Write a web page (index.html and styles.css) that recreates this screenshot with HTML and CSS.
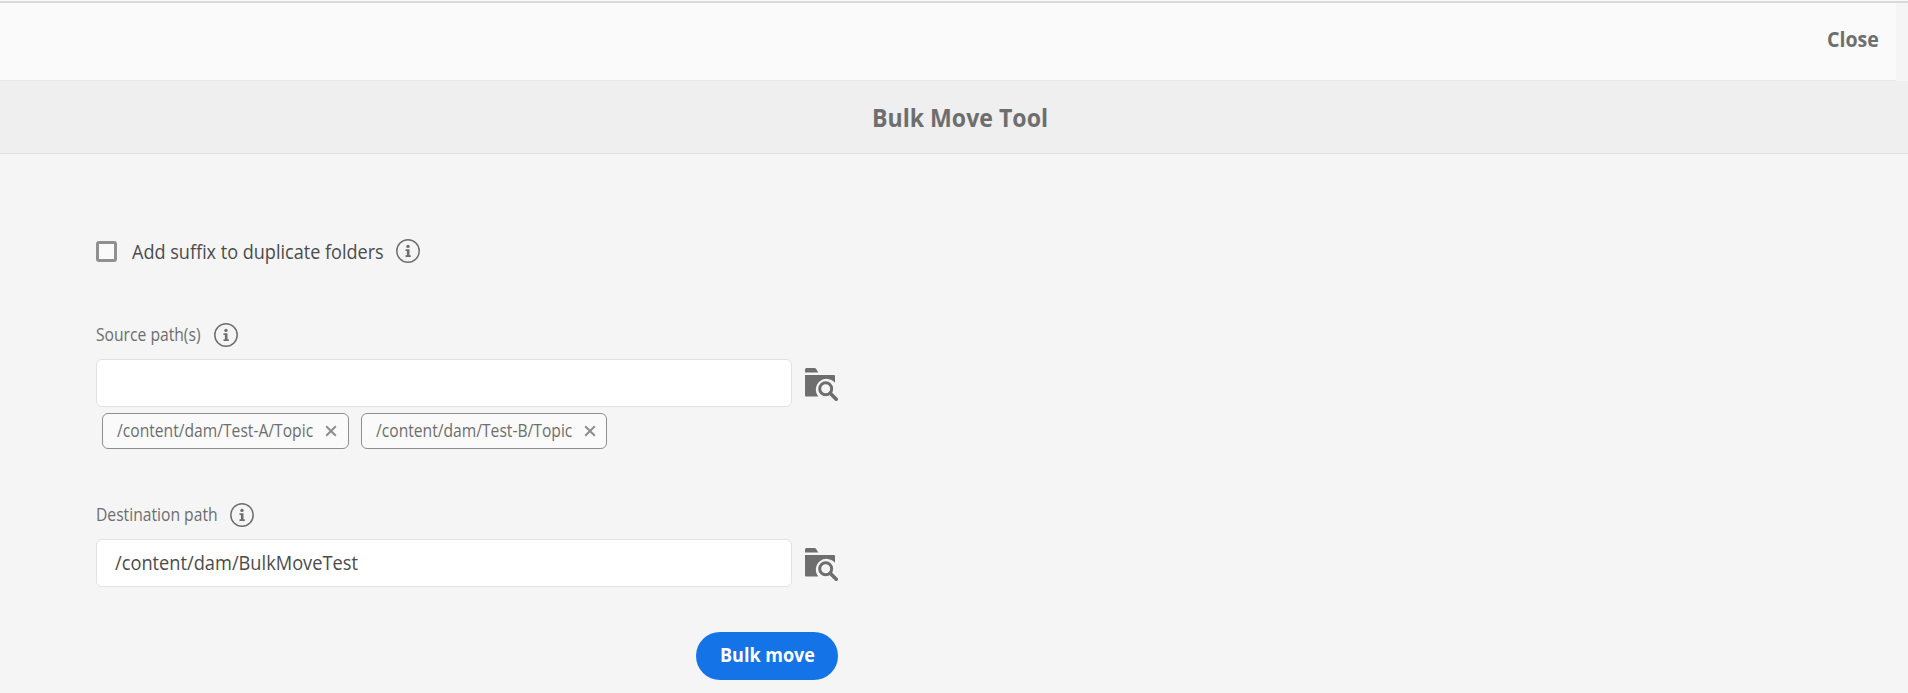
FILE: index.html
```html
<!DOCTYPE html>
<html lang="en">
<head>
<meta charset="utf-8">
<title>Bulk Move Tool</title>
<link rel="stylesheet" href="styles.css">
</head>
<body>
<svg class="defs" aria-hidden="true">
  <symbol id="info" viewBox="0 0 24 24">
    <circle cx="12" cy="12" r="11.2" fill="none" stroke="currentColor" stroke-width="1.5"/>
    <circle cx="12" cy="7.4" r="1.700" fill="currentColor"/>
    <path fill="currentColor" d="M9.500 10.300h4v6h1.300v1.700H9.500v-1.700h1.400v-4.300H9.500z"/>
  </symbol>
  <symbol id="browse" viewBox="0 0 33 33">
    <path fill="currentColor" d="M0 4.500V1.500Q0 0 1.500 0H9.500Q10.500 0 11 .8L13.300 4.500z"/>
    <path fill="currentColor" d="M0 7H29Q30 7 30 8V14.800A10.500 10.500 0 0 0 13.300 28.500H1Q0 28.500 0 27.500z"/>
    <circle cx="20.700" cy="20.800" r="6" fill="none" stroke="currentColor" stroke-width="3"/>
    <path d="M25.200 25.300L31.200 31.300" stroke="currentColor" stroke-width="3.600" stroke-linecap="round"/>
  </symbol>
  <symbol id="cross" viewBox="0 0 12 12">
    <path d="M1.200 1.200L10.800 10.800M10.800 1.200L1.200 10.800" stroke="currentColor" stroke-width="2" fill="none"/>
  </symbol>
</svg>
<header class="topbar"><a class="close">Close</a></header>
<div class="titlebar"><h1 class="title">Bulk Move Tool</h1></div>
<main class="form">
  <div class="check-row">
    <span class="checkbox"></span>
    <span class="check-label">Add suffix to duplicate folders</span>
    <svg class="info"><use href="#info"/></svg>
  </div>
  <section class="field source">
    <div class="label-row"><label class="label label-source">Source path(s)</label><svg class="info"><use href="#info"/></svg></div>
    <div class="input-row"><div class="input"></div><svg class="browse"><use href="#browse"/></svg></div>
    <div class="tags">
      <div class="tag"><span class="tag-text">/content/dam/Test-A/Topic</span><svg class="cross"><use href="#cross"/></svg></div>
      <div class="tag tag-b"><span class="tag-text">/content/dam/Test-B/Topic</span><svg class="cross"><use href="#cross"/></svg></div>
    </div>
  </section>
  <section class="field">
    <div class="label-row"><label class="label label-dest">Destination path</label><svg class="info"><use href="#info"/></svg></div>
    <div class="input-row"><div class="input"><span class="value">/content/dam/BulkMoveTest</span></div><svg class="browse"><use href="#browse"/></svg></div>
  </section>
  <div class="actions"><button class="submit"><span class="submit-text">Bulk move</span></button></div>
</main>
</body>
</html>
```
FILE: styles.css
```css
* { box-sizing: border-box; }
body {
  margin: 0;
  height: 693px;
  overflow: hidden;
  background: #f5f5f5;
  border-top: 1px solid #fafafa;
  font-family: "Open Sans", "Noto Sans", sans-serif;
  font-stretch: 88%;
  color: #6e6e6e;
  white-space: nowrap;
}
.defs { display: none; }
svg { display: block; flex: none; }
.topbar {
  height: 80px;
  border-top: 2px solid #d9dbda;
  background: linear-gradient(#fafafa, #fafafa) no-repeat 0 0 / 1896px 77px, linear-gradient(#e9e9e9, #e9e9e9) no-repeat 0 77px / 1896px 1px;
  display: flex;
  justify-content: flex-end;
  padding: 22px 30px 0 0;
}
.close, .title, .check-label, .label, .value, .tag-text, .submit-text {
  display: block;
  transform-origin: 0 50%;
}
.close { width: 51px; font-size: 20.500px; line-height: 28px; font-weight: 700; transform: scaleX(.955); }
.titlebar {
  height: 73px;
  background: #efefef;
  border-bottom: 1px solid #dfdfdf;
  padding: 18px 0 0 872px;
}
.title { margin: 0; font-size: 25.500px; line-height: 36px; font-weight: 700; transform: scaleX(.906); }
.form { padding: 84px 0 0 96px; width: 838px; }
.check-row { display: flex; align-items: center; height: 26px; }
.checkbox { width: 21px; height: 21px; border: 3px solid #909090; border-radius: 3px; background: #fafafa; }
.check-label { width: 251px; margin: 1px 12.500px 0 15px; font-size: 20px; line-height: 26px; color: #4b4b4b; transform: scaleX(.903); }
.info { width: 24px; height: 24px; }
.field { margin-top: 58px; }
.label-row { display: flex; align-items: center; height: 26px; margin-bottom: 11px; }
.label { font-size: 17.500px; line-height: 24px; margin-bottom: 2px; transform: scaleX(.895); }
.label-source { width: 117.500px; }
.label-dest { width: 133.500px; }
.source { height: 122px; }
.input-row { display: flex; gap: 13px; }
.input { width: 696px; height: 48px; border: 1px solid #e1e1e1; border-radius: 6px; background: #fff; padding: 0 0 0 18px; line-height: 46px; font-size: 20px; color: #4b4b4b; }
.value { transform: scaleX(.912); }
.browse { width: 33px; height: 33px; margin-top: 9px; }
.tags { display: flex; gap: 12px; padding: 6px 0 0 6px; }
.tag { width: 247px; height: 36px; border: 1px solid #8e8e8e; border-radius: 6px; background: #fafafa; display: flex; align-items: center; padding-left: 14px; font-size: 17.500px; }
.tag-b { width: 246px; }
.tag-text { width: 208px; margin-bottom: 2px; transform: scaleX(.894); }
.cross { width: 12px; height: 12px; color: #8e8e8e; }
.actions { display: flex; justify-content: flex-end; margin-top: 45px; }
.submit { width: 142px; height: 48px; border: 0; border-radius: 24px; background: #1473e6; color: #fff; font: inherit; font-size: 20px; font-weight: 700; padding: 0 0 3px 24px; text-align: left; }
.submit-text { transform: scaleX(.9); }
```
